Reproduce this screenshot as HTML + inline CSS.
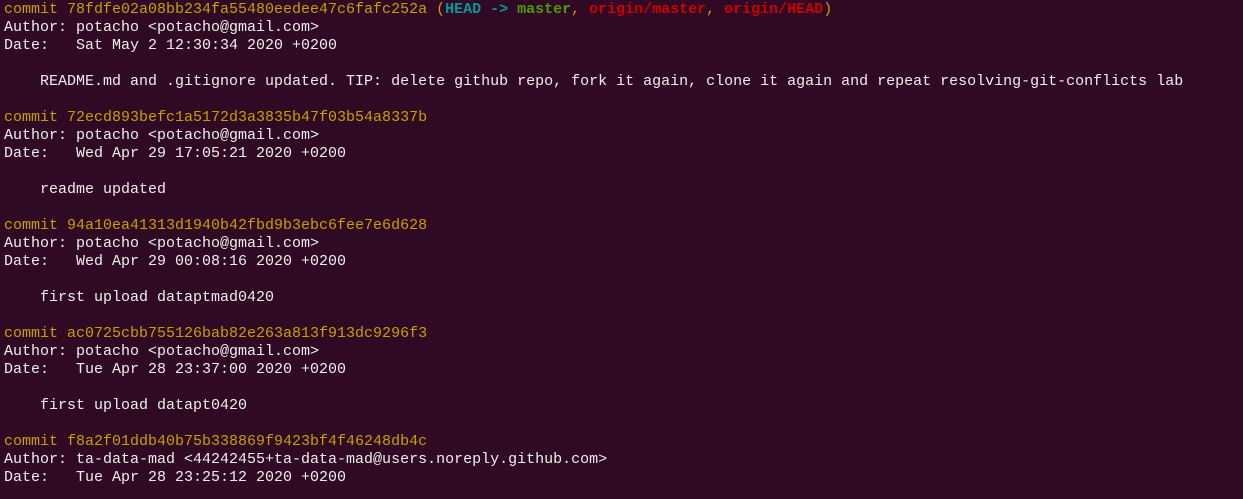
<!DOCTYPE html><html><head><style>
body{margin:0;background:#300a24;width:1243px;height:499px;overflow:hidden}
pre{margin:0;padding:1px 0 0 4px;font:15px/18px "Liberation Mono",monospace;color:#eeeeec}
.y{color:#c4a000}.c{color:#06989a;font-weight:bold}.g{color:#4e9a06;font-weight:bold}.r{color:#cc0000;font-weight:bold}
</style></head><body><pre><span class="y">commit 78fdfe02a08bb234fa55480eedee47c6fafc252a (</span><span class="c">HEAD -&gt; </span><span class="g">master</span><span class="y">, </span><span class="r">origin/master</span><span class="y">, </span><span class="r">origin/HEAD</span><span class="y">)</span>
Author: potacho &lt;potacho@gmail.com&gt;
Date:   Sat May 2 12:30:34 2020 +0200

    README.md and .gitignore updated. TIP: delete github repo, fork it again, clone it again and repeat resolving-git-conflicts lab

<span class="y">commit 72ecd893befc1a5172d3a3835b47f03b54a8337b</span>
Author: potacho &lt;potacho@gmail.com&gt;
Date:   Wed Apr 29 17:05:21 2020 +0200

    readme updated

<span class="y">commit 94a10ea41313d1940b42fbd9b3ebc6fee7e6d628</span>
Author: potacho &lt;potacho@gmail.com&gt;
Date:   Wed Apr 29 00:08:16 2020 +0200

    first upload dataptmad0420

<span class="y">commit ac0725cbb755126bab82e263a813f913dc9296f3</span>
Author: potacho &lt;potacho@gmail.com&gt;
Date:   Tue Apr 28 23:37:00 2020 +0200

    first upload datapt0420

<span class="y">commit f8a2f01ddb40b75b338869f9423bf4f46248db4c</span>
Author: ta-data-mad &lt;44242455+ta-data-mad@users.noreply.github.com&gt;
Date:   Tue Apr 28 23:25:12 2020 +0200
</pre></body></html>
